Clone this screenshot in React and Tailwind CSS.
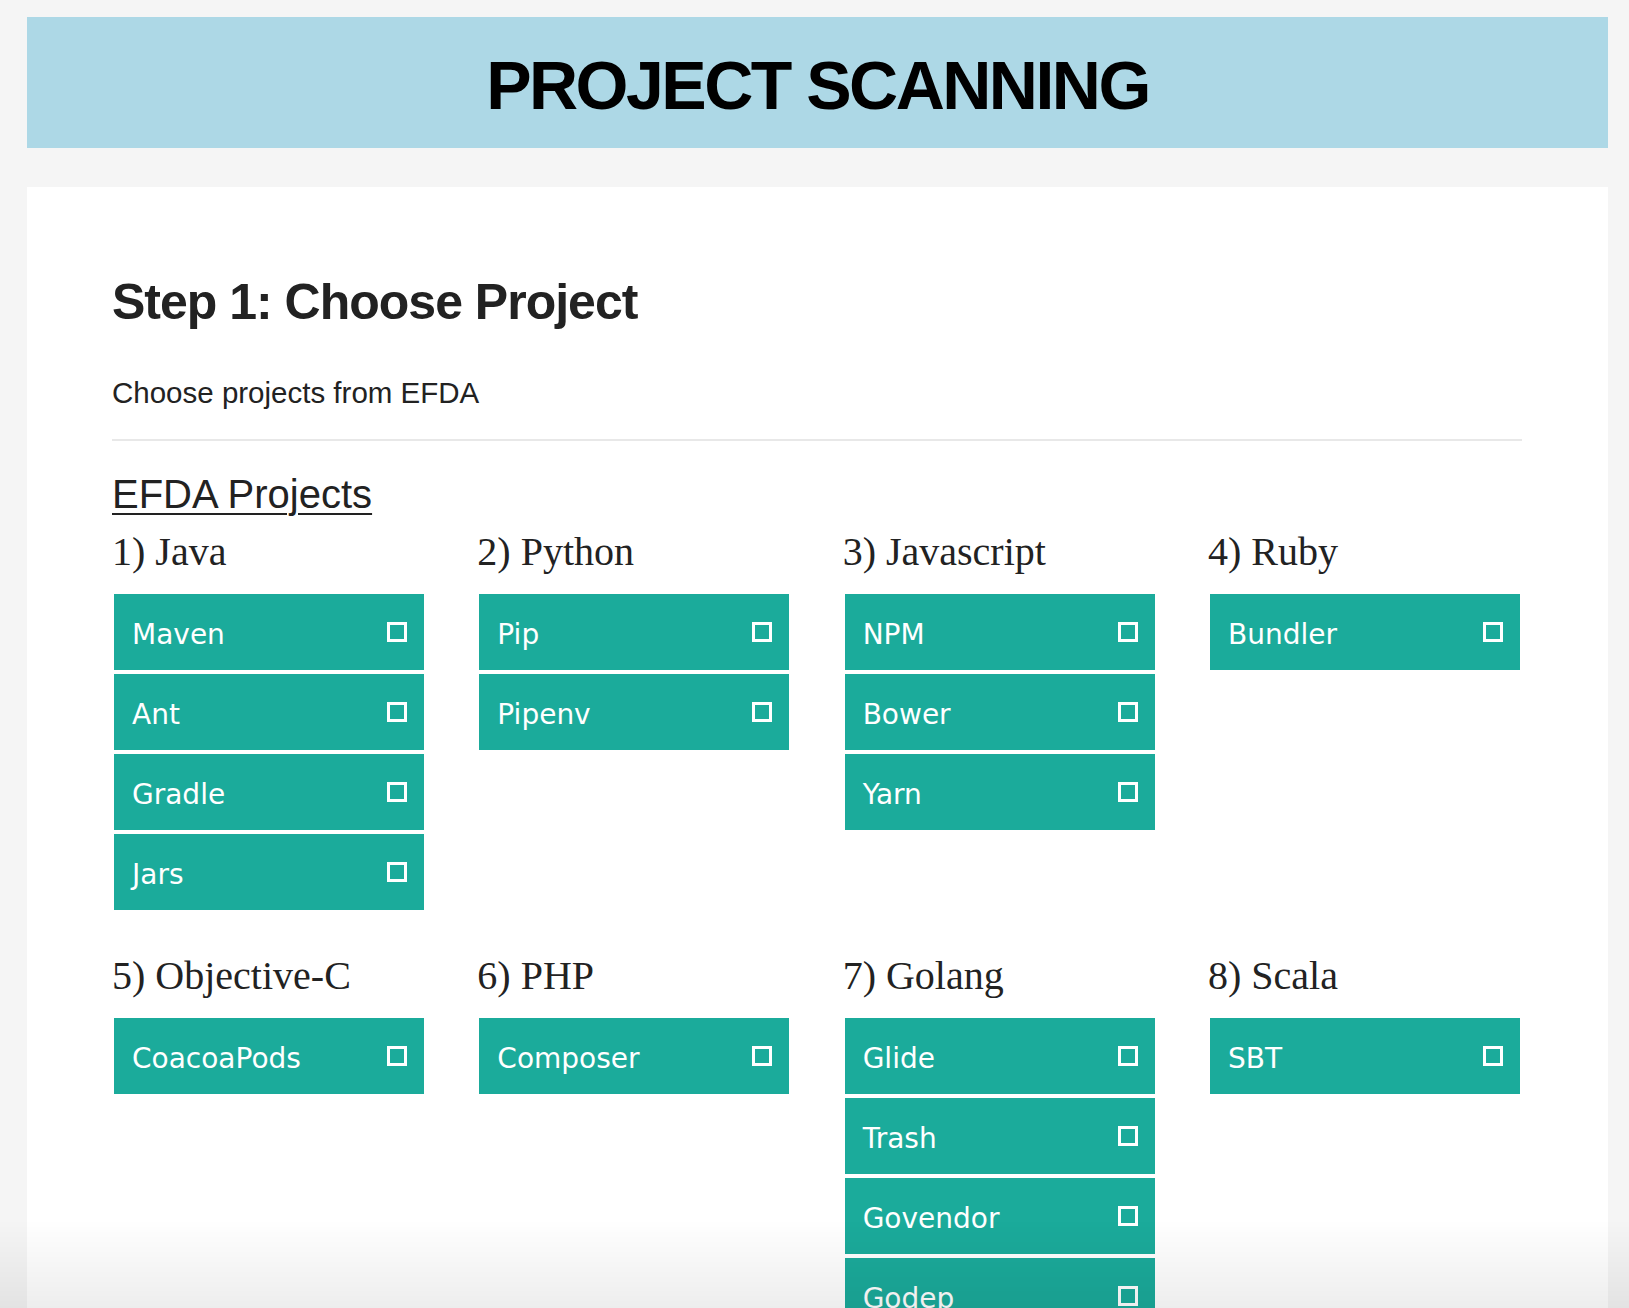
import React from 'react';

const groups = [
  { title: '1) Java', items: ['Maven', 'Ant', 'Gradle', 'Jars'] },
  { title: '2) Python', items: ['Pip', 'Pipenv'] },
  { title: '3) Javascript', items: ['NPM', 'Bower', 'Yarn'] },
  { title: '4) Ruby', items: ['Bundler'] },
  { title: '5) Objective-C', items: ['CoacoaPods'] },
  { title: '6) PHP', items: ['Composer'] },
  { title: '7) Golang', items: ['Glide', 'Trash', 'Govendor', 'Godep'] },
  { title: '8) Scala', items: ['SBT'] },
];

function Tile({ label }) {
  return (
    <div className="h-[76px] bg-[#1bab9b] flex items-center justify-between pl-[18px] pr-[17px] cursor-pointer">
      <span className="pt-[6px] text-white text-[28px] leading-[34px] font-['DejaVu_Sans',sans-serif]">{label}</span>
      <span className="w-[20px] h-[20px] border-[3px] border-white"></span>
    </div>
  );
}

export default function App() {
  return (
    <div className="min-h-screen bg-[#f5f5f5] pt-[17px] font-['Liberation_Sans',Arial,sans-serif] text-[#222]">
      {/* Title bar */}
      <div className="ml-[27px] mr-[21px] h-[131px] pt-[5px] bg-[#add8e6] flex items-center justify-center">
        <h1 className="text-[68px] leading-[68px] font-bold tracking-[-2.5px] text-black">PROJECT SCANNING</h1>
      </div>

      {/* Step card */}
      <div className="ml-[27px] mr-[21px] mt-[39px] bg-white pt-[85px] pl-[85px] pr-[86px] pb-[120px]">
        <h2 className="text-[50px] leading-[60px] font-bold tracking-[-1px]">Step 1: Choose Project</h2>
        <p className="mt-[43px] text-[29.5px] leading-[36px]">Choose projects from EFDA</p>
        <div className="mt-[28px] h-[2px] bg-[#e8e8e8]"></div>
        <div className="mt-[29px] text-[40px] leading-[48px] underline decoration-[2px] underline-offset-[5px]">
          EFDA Projects
        </div>

        <div className="mt-[10px] grid grid-cols-[repeat(4,314px)] justify-between gap-y-[40px]">
          {groups.map((g) => (
            <div key={g.title}>
              <h3 className="text-[40px] leading-[48px] font-['Liberation_Serif','Times_New_Roman',serif]">{g.title}</h3>
              <div className="mt-[16px] flex flex-col gap-[4px] p-[2px]">
                {g.items.map((item) => (
                  <Tile key={item} label={item} />
                ))}
              </div>
            </div>
          ))}
        </div>
      </div>

      {/* bottom fade */}
      <div className="fixed inset-x-0 bottom-0 h-[88px] pointer-events-none bg-gradient-to-b from-transparent to-black/[0.07]"></div>
    </div>
  );
}
